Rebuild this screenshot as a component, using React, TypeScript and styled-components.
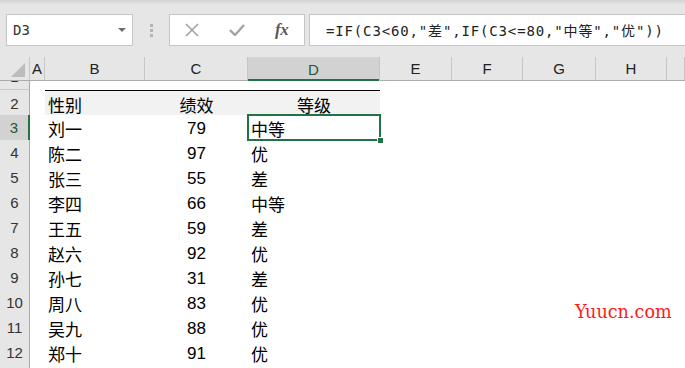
import React from 'react';
import styled, { createGlobalStyle } from 'styled-components';

const GlobalStyle = createGlobalStyle`
  html, body { margin: 0; padding: 0; background: #fff; }
  body { font-family: "Liberation Sans", "Noto Sans CJK SC", sans-serif; overflow: hidden; }
`;

const COLS = '30px 15px 100px 103px 132px 72px 71px 73px 71px 1fr';

const Page = styled.div`
  position: relative;
  width: 685px;
  height: 368px;
  overflow: hidden;
  background: #fff;
`;

const Toolbar = styled.div`
  height: 57px;
  box-sizing: border-box;
  background: linear-gradient(#d2d2d2 0px, #e6e6e6 5px, #e6e6e6 100%);
  display: flex;
  align-items: flex-start;
  padding: 14px 0 0 6px;
`;

const NameBox = styled.div`
  width: 127px;
  height: 32px;
  box-sizing: border-box;
  background: #fff;
  border: 1px solid #c6c6c6;
  display: flex;
  align-items: center;
  justify-content: space-between;
  padding: 0 6px 0 6px;
  font-family: "DejaVu Sans Mono", "Liberation Mono", monospace;
  font-size: 14px;
  color: #333;
`;

const DropArrow = styled.span`
  width: 0;
  height: 0;
  border-left: 4px solid transparent;
  border-right: 4px solid transparent;
  border-top: 4px solid #6f6f6f;
`;

const Dots = styled.div`
  margin: 10px 16px 0 17px;
  width: 3px;
  display: flex;
  flex-direction: column;
  gap: 2px;
  span { display: block; width: 3px; height: 3px; background: #b5b5b5; }
`;

const FxBox = styled.div`
  width: 136px;
  height: 32px;
  box-sizing: border-box;
  background: #fff;
  border: 1px solid #c6c6c6;
  display: grid;
  grid-template-columns: repeat(3, 1fr);
  align-items: center;
  justify-items: center;
`;

const FxText = styled.span`
  font-family: "Liberation Serif", "DejaVu Serif", serif;
  font-style: italic;
  font-weight: bold;
  font-size: 17px;
  color: #5a5a5a;
  letter-spacing: -0.5px;
`;

const FormulaBox = styled.div`
  flex: 1;
  margin-left: 4px;
  height: 32px;
  box-sizing: border-box;
  background: #fff;
  border: 1px solid #c6c6c6;
  border-right: none;
  display: flex;
  align-items: center;
  padding-left: 16px;
  font-family: "DejaVu Sans Mono", "Noto Sans CJK SC", monospace;
  font-size: 14px;
  color: #222;
  white-space: nowrap;
  letter-spacing: 0.85px;
`;

const Grid = styled.div`
  display: flex;
  flex-direction: column;
`;

const HeaderRow = styled.div`
  display: grid;
  grid-template-columns: ${COLS};
  height: 24px;
  background: #e6e6e6;
  border-bottom: 1px solid #ababab;
  box-sizing: border-box;
`;

const Corner = styled.div`
  position: relative;
  border-right: 1px solid #c6c6c6;
  &::after {
    content: '';
    position: absolute;
    right: 4px;
    bottom: 3px;
    width: 0;
    height: 0;
    border-left: 14px solid transparent;
    border-bottom: 14px solid #bcbcbc;
  }
`;

const ColHead = styled.div<{ $active?: boolean }>`
  display: flex;
  align-items: center;
  justify-content: center;
  font-size: 15px;
  color: ${p => (p.$active ? '#1d5a36' : '#222')};
  background: ${p => (p.$active ? '#d2d2d2' : 'transparent')};
  border-right: 1px solid #c6c6c6;
  box-shadow: ${p => (p.$active ? 'inset 0 -2px 0 #217346' : 'none')};
  margin-bottom: ${p => (p.$active ? '-1px' : '0')};
  position: relative;
`;

const Row = styled.div<{ $h: number }>`
  display: grid;
  grid-template-columns: ${COLS};
  height: ${p => p.$h}px;
  overflow: hidden;
`;

const RowHead = styled.div<{ $active?: boolean; $clip?: boolean }>`
  display: flex;
  align-items: ${p => (p.$clip ? 'flex-end' : 'center')};
  justify-content: center;
  box-sizing: border-box;
  font-size: 15px;
  color: ${p => (p.$active ? '#1d5a36' : '#333')};
  background: ${p => (p.$active ? '#d2d2d2' : '#e6e6e6')};
  border-bottom: 1px solid #c9c9c9;
  border-right: ${p => (p.$active ? '2px solid #217346' : '1px solid #a9a9a9')};
  overflow: hidden;
  span { line-height: 24px; flex-shrink: 0; }
`;

const Cell = styled.div<{
  $align?: 'left' | 'center';
  $fill?: boolean;
  $top?: boolean;
  $bottom?: boolean;
}>`
  position: relative;
  box-sizing: border-box;
  display: flex;
  align-items: center;
  justify-content: ${p => (p.$align === 'center' ? 'center' : 'flex-start')};
  padding: 1px 3px 0 3px;
  font-size: 17px;
  color: #000;
  white-space: nowrap;
  background: ${p => (p.$fill ? '#f2f2f2' : 'transparent')};
  border-top: ${p => (p.$top ? '1px solid #000' : 'none')};
  border-bottom: ${p => (p.$bottom ? '1px solid #000' : 'none')};
`;

const Selection = styled.div`
  position: absolute;
  left: 247px;
  top: 114px;
  width: 134px;
  height: 27px;
  box-sizing: border-box;
  border: 2px solid #217346;
  pointer-events: none;
  &::after {
    content: '';
    position: absolute;
    right: -4px;
    bottom: -4px;
    width: 5px;
    height: 5px;
    background: #217346;
    border: 1px solid #fff;
    border-width: 1px 0 0 1px;
  }
`;

const Watermark = styled.div`
  position: absolute;
  left: 575px;
  top: 302px;
  font-family: "DejaVu Serif", "Liberation Serif", serif;
  font-size: 17.6px;
  color: #ff1a1a;
`;

type Rec = { name: string; score: string; grade: string };

const data: Rec[] = [
  { name: '刘一', score: '79', grade: '中等' },
  { name: '陈二', score: '97', grade: '优' },
  { name: '张三', score: '55', grade: '差' },
  { name: '李四', score: '66', grade: '中等' },
  { name: '王五', score: '59', grade: '差' },
  { name: '赵六', score: '92', grade: '优' },
  { name: '孙七', score: '31', grade: '差' },
  { name: '周八', score: '83', grade: '优' },
  { name: '吴九', score: '88', grade: '优' },
  { name: '郑十', score: '91', grade: '优' },
];

const letters = ['A', 'B', 'C', 'D', 'E', 'F', 'G', 'H', ''];

const Empties = ({ n }: { n: number }) => (
  <>
    {Array.from({ length: n }).map((_, i) => (
      <Cell key={i} />
    ))}
  </>
);

export default function App() {
  return (
    <Page>
      <GlobalStyle />
      <Toolbar>
        <NameBox>
          <span>D3</span>
          <DropArrow />
        </NameBox>
        <Dots>
          <span />
          <span />
          <span />
        </Dots>
        <FxBox>
          <svg width="14" height="14" viewBox="0 0 14 14">
            <path d="M1 1 L13 13 M13 1 L1 13" stroke="#a3a3a3" strokeWidth="1.6" fill="none" />
          </svg>
          <svg width="16" height="12" viewBox="0 0 16 12">
            <path d="M1 6 L6 11 L15 1" stroke="#a3a3a3" strokeWidth="2.4" fill="none" />
          </svg>
          <FxText>fx</FxText>
        </FxBox>
        <FormulaBox>=IF(C3&lt;60,"差",IF(C3&lt;=80,"中等","优"))</FormulaBox>
      </Toolbar>
      <Grid>
        <HeaderRow>
          <Corner />
          {letters.map((l, i) => (
            <ColHead key={i} $active={l === 'D'}>
              {l}
            </ColHead>
          ))}
        </HeaderRow>
        <Row $h={9}>
          <RowHead $clip>
            <span>1</span>
          </RowHead>
          <Empties n={9} />
        </Row>
        <Row $h={25}>
          <RowHead>
            <span>2</span>
          </RowHead>
          <Cell />
          <Cell $fill $top $bottom>性别</Cell>
          <Cell $fill $top $bottom $align="center">绩效</Cell>
          <Cell $fill $top $bottom $align="center">等级</Cell>
          <Empties n={5} />
        </Row>
        {data.map((r, i) => {
          const last = i === data.length - 1;
          return (
            <Row $h={25} key={r.name}>
              <RowHead $active={i === 0}>
                <span>{i + 3}</span>
              </RowHead>
              <Cell />
              <Cell $bottom={last}>{r.name}</Cell>
              <Cell $bottom={last} $align="center">{r.score}</Cell>
              <Cell $bottom={last}>{r.grade}</Cell>
              <Empties n={5} />
            </Row>
          );
        })}
        <Row $h={10}>
          <RowHead $clip>
            <span />
          </RowHead>
          <Empties n={9} />
        </Row>
      </Grid>
      <Selection />
      <Watermark>Yuucn.com</Watermark>
    </Page>
  );
}
